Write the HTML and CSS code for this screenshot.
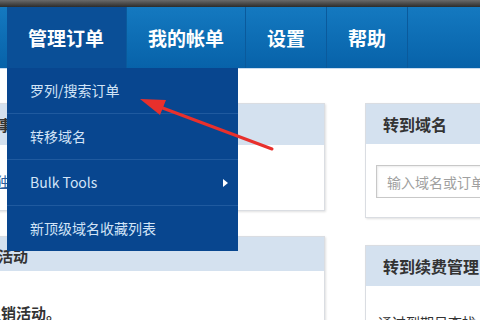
FILE: index.html
```html
<html>
	<head>
		<title>域名管理 - 管理订单</title>
		<meta charset="utf-8">
		<link rel="stylesheet" href="styles.css">
	</head>
	<body>
		<div class="topbar"></div>

		<div class="nav">
			<ul class="tabs">
				<li class="tab active">
					管理订单
					<ul class="dropdown">
						<li class="item">罗列/搜索订单</li>
						<li class="item">转移域名</li>
						<li class="item sub">Bulk Tools <span class="caret"></span></li>
						<li class="item">新顶级域名收藏列表</li>
					</ul>
				</li>
				<li class="tab">我的帐单</li>
				<li class="tab">设置</li>
				<li class="tab">帮助</li>
			</ul>
		</div> <!-- end .nav -->

		<div class="content">

			<div class="col left">
				<div class="card first">
					<div class="card-head">待办事项</div>
					<div class="card-body">
						<a class="link" href="#">查看独立订单</a>
					</div>
				</div>
				<div class="card">
					<div class="card-head">促销活动</div>
					<div class="card-body">
						<p class="text">本月促销活动。</p>
					</div>
				</div>
			</div> <!-- end .left -->

			<div class="col right">
				<div class="card first">
					<div class="card-head">转到域名</div>
					<div class="card-body search">
						<input class="field" type="text" placeholder="输入域名或订单号">
					</div>
				</div>
				<div class="card">
					<div class="card-head">转到续费管理</div>
					<div class="card-body">
						<p class="text">通过到期日查找</p>
					</div>
				</div>
			</div> <!-- end .right -->

		</div> <!-- end .content -->

		<svg class="arrow" width="480" height="320" viewBox="0 0 480 320">
			<line x1="160" y1="107" x2="272" y2="149" stroke="#e8302c" stroke-width="3" stroke-linecap="round"/>
			<polygon points="140,99 166,100 160,115" fill="#e8302c"/>
		</svg>
	</body>
</html>
```

FILE: styles.css
```css
html, body {
	margin: 0;
	width: 480px;
	height: 320px;
	overflow: hidden;
}

body {
	background: #fff;
	font-family: "Noto Sans CJK SC", "Liberation Sans", sans-serif;
	position: relative;
}

.topbar {
	height: 7px;
	background: linear-gradient(#6a6a6a, #2c2c2c);
}

.nav {
	height: 61px;
	background: linear-gradient(#1479c0, #0762a9);
	padding-left: 7px;
	border-bottom: 1px solid #c9dcef;
}

.tabs {
	list-style-type: none;
	margin: 0;
	padding: 0;
	display: flex;
	height: 100%;
}

.tab {
	position: relative;
	padding: 0 21px 0 21px;
	line-height: 61px;
	font-size: 19px;
	font-weight: bold;
	color: #fff;
	border-right: 1px solid #0a5a9c;
}

.tab.active {
	background: #0a4f97;
	padding: 0 22px 0 21px;
}

.dropdown {
	list-style-type: none;
	position: absolute;
	top: 61px;
	left: 0;
	width: 231px;
	margin: 0;
	padding: 0;
	background: #08468f;
	z-index: 5;
}

.dropdown .item {
	height: 45px;
	line-height: 45px;
	padding-left: 23px;
	padding-right: 10px;
	font-size: 14px;
	font-weight: normal;
	color: #d2e4f7;
	border-bottom: 1px solid #1f5a9f;
	display: flex;
	align-items: center;
}

.dropdown .item:last-child {
	border-bottom: none;
}

.dropdown .caret {
	margin-left: auto;
	width: 0;
	height: 0;
	border-top: 4px solid transparent;
	border-bottom: 4px solid transparent;
	border-left: 5px solid #fff;
}

.content {
	display: flex;
	align-items: flex-start;
	padding-top: 34px;
	margin-left: -48px;
}

.col {
	display: flex;
	flex-direction: column;
	flex-shrink: 0;
}

.left {
	width: 373px;
	gap: 25px;
}

.right {
	width: 170px;
	margin-left: 40px;
	gap: 27px;
}

.card {
	background: #fff;
	border: 1px solid #dadde2;
	box-shadow: 1px 1px 2px rgba(0,0,0,0.12);
}

.card-head {
	background: #d4e1ef;
	height: 40px;
	line-height: 40px;
	padding-left: 17px;
	font-size: 16px;
	font-weight: bold;
	color: #333;
}

.left .card-head {
	padding-left: 15px;
	font-size: 15px;
}

.left .card.first .card-head {
	height: 41px;
	line-height: 41px;
}

.left .card.first .card-body {
	height: 65px;
}

.left .card:not(.first) .card-head {
	height: 34px;
	line-height: 38px;
}

.card-body {
	padding: 0 12px;
}

.left .card-body {
	padding: 0 15px;
}

.link {
	display: block;
	padding-top: 26px;
	font-size: 14px;
	color: #2a5d9c;
}

.text {
	margin: 0;
	padding-top: 30px;
	font-size: 15px;
	font-weight: bold;
	color: #333;
}

.left .text {
	padding-left: 3px;
	margin-left: -15px;
	padding-top: 31px;
}

.right .text {
	font-weight: normal;
	font-size: 14px;
	padding-top: 26px;
}

.search {
	padding: 21px 0 19px 10px;
}

.field {
	display: block;
	width: 200px;
	height: 33px;
	border: 1px solid #c8c8c8;
	padding: 0 10px;
	font-family: "Noto Sans CJK SC", "Liberation Sans", sans-serif;
	font-size: 14px;
	color: #999;
	box-shadow: inset 1px 1px 2px rgba(0,0,0,0.08);
}

.field::placeholder {
	color: #a0a0a0;
}

.arrow {
	position: absolute;
	top: 0;
	left: 0;
	z-index: 10;
	pointer-events: none;
}
```
